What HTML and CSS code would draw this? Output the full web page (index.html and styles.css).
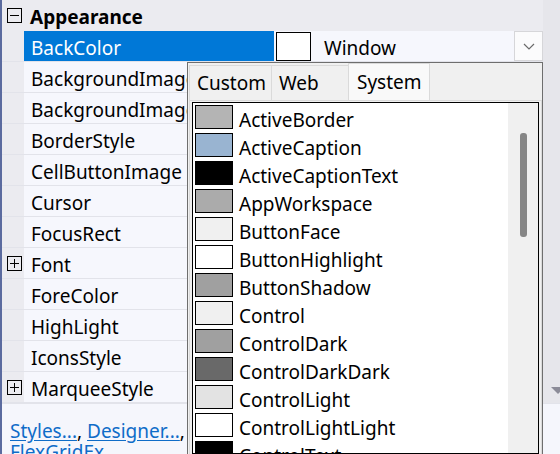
FILE: index.html
```html
<!DOCTYPE html>
<html>
<head>
<meta charset="utf-8">
<link rel="stylesheet" href="styles.css">
</head>
<body>
<div class="app">
  <div class="main">
    <div class="pane">
      <div class="row cat">
        <span class="gut"><span class="box minus"></span></span>
        <span class="label">Appearance</span>
      </div>
      <div class="row sel">
        <span class="gut"></span>
        <span class="label">BackColor</span>
        <span class="value">
          <span class="cswatch"></span>
          <span class="vtext">Window</span>
          <span class="ddbtn"><svg width="12" height="7" viewBox="0 0 12 7"><path d="M1 1 L6 6 L11 1" fill="none" stroke="#6a6a6a" stroke-width="1.2"/></svg></span>
        </span>
      </div>
      <div class="row"><span class="gut"></span><span class="label">BackgroundImage</span><span class="value"></span></div>
      <div class="row"><span class="gut"></span><span class="label">BackgroundImageLayout</span><span class="value"></span></div>
      <div class="row"><span class="gut"></span><span class="label">BorderStyle</span><span class="value"></span></div>
      <div class="row"><span class="gut"></span><span class="label">CellButtonImage</span><span class="value"></span></div>
      <div class="row"><span class="gut"></span><span class="label">Cursor</span><span class="value"></span></div>
      <div class="row"><span class="gut"></span><span class="label">FocusRect</span><span class="value"></span></div>
      <div class="row"><span class="gut"><span class="box plus"></span></span><span class="label">Font</span><span class="value"></span></div>
      <div class="row"><span class="gut"></span><span class="label">ForeColor</span><span class="value"></span></div>
      <div class="row"><span class="gut"></span><span class="label">HighLight</span><span class="value"></span></div>
      <div class="row"><span class="gut"></span><span class="label">IconsStyle</span><span class="value"></span></div>
      <div class="row"><span class="gut"><span class="box plus"></span></span><span class="label">MarqueeStyle</span><span class="value"></span></div>
    </div>
    <div class="vscroll">
      <svg width="17" height="7" viewBox="0 0 17 7"><polygon points="8,0 22,0 15,7" fill="#8b8b98"/></svg>
    </div>
  </div>
  <div class="commands">
    <a href="#">Styles...</a>, <a href="#">Designer...</a>, <br><a href="#">FlexGridEx...</a>
  </div>

  <div class="popup">
    <div class="tabs">
      <span class="tab t-custom">Custom</span>
      <span class="tab t-web">Web</span>
      <span class="tab t-system active">System</span>
    </div>
    <div class="panel">
      <div class="listbox">
        <div class="items">
          <div class="item"><span class="sw" style="background:#b4b4b4"></span><span class="nm">ActiveBorder</span></div>
          <div class="item"><span class="sw" style="background:#99b4d1"></span><span class="nm">ActiveCaption</span></div>
          <div class="item"><span class="sw" style="background:#000000"></span><span class="nm">ActiveCaptionText</span></div>
          <div class="item"><span class="sw" style="background:#ababab"></span><span class="nm">AppWorkspace</span></div>
          <div class="item"><span class="sw" style="background:#f0f0f0"></span><span class="nm">ButtonFace</span></div>
          <div class="item"><span class="sw" style="background:#ffffff"></span><span class="nm">ButtonHighlight</span></div>
          <div class="item"><span class="sw" style="background:#a0a0a0"></span><span class="nm">ButtonShadow</span></div>
          <div class="item"><span class="sw" style="background:#f0f0f0"></span><span class="nm">Control</span></div>
          <div class="item"><span class="sw" style="background:#a0a0a0"></span><span class="nm">ControlDark</span></div>
          <div class="item"><span class="sw" style="background:#696969"></span><span class="nm">ControlDarkDark</span></div>
          <div class="item"><span class="sw" style="background:#e3e3e3"></span><span class="nm">ControlLight</span></div>
          <div class="item"><span class="sw" style="background:#ffffff"></span><span class="nm">ControlLightLight</span></div>
          <div class="item"><span class="sw" style="background:#000000"></span><span class="nm">ControlText</span></div>
        </div>
        <div class="lscroll"><span class="thumb"></span></div>
      </div>
    </div>
  </div>
</div>
</body>
</html>
```
FILE: styles.css
```css
html, body {
  margin: 0;
  padding: 0;
}
body {
  width: 560px;
  height: 454px;
  overflow: hidden;
  font-family: "Noto Sans", "Open Sans", sans-serif;
  font-size: 19px;
  color: #000;
  background: #f5f6fc;
}
.app {
  position: relative;
  height: 454px;
  border-left: 2px solid #5b6b9f;
  box-sizing: border-box;
  overflow: hidden;
}
.main {
  display: flex;
  height: 403px;
}
.pane {
  width: 541px;
  background: #ebebf0;
}
.row {
  display: grid;
  grid-template-columns: 22px 250px 1fr;
  height: 30px;
  border-bottom: 1px solid #e2e3ea;
  white-space: nowrap;
}
.gut {
  background: #ebebf0;
  display: flex;
  align-items: center;
  padding-left: 5px;
}
.label {
  background: #f6f7fd;
  padding: 4px 0 0 7px;
  line-height: 26px;
  overflow: hidden;
}
.value {
  background: #f6f7fd;
  border-left: 1px solid #e2e3ea;
}
.row.cat {
  grid-template-columns: 22px 1fr;
  border-bottom-color: #ebebf0;
}
.row.cat .label {
  background: #ebebf0;
  font-weight: bold;
  padding-left: 6px;
}
.row.sel .label {
  background: #0078d7;
  color: #fff;
}
.row.sel .value {
  display: flex;
  align-items: center;
  border-left: 0;
}
.cswatch {
  width: 35px;
  height: 29px;
  margin-left: 2px;
  border: 1px solid #000;
  background: #fff;
  box-sizing: border-box;
}
.vtext {
  margin-left: 13px;
  padding-top: 4px;
  flex: 1;
}
.ddbtn {
  width: 29px;
  height: 30px;
  box-sizing: border-box;
  border: 1px solid #d6d6d9;
  background: #fbfbfc;
  display: flex;
  align-items: center;
  justify-content: center;
}
.box {
  position: relative;
  width: 15px;
  height: 15px;
  border: 1px solid #000;
  box-sizing: border-box;
  background: transparent;
}
.box::before {
  content: "";
  position: absolute;
  left: 2px;
  right: 2px;
  top: 6px;
  height: 1px;
  background: #000;
}
.box.plus::after {
  content: "";
  position: absolute;
  top: 2px;
  bottom: 2px;
  left: 6px;
  width: 1px;
  background: #000;
}
.vscroll {
  width: 17px;
  background: #e6e6eb;
  display: flex;
  flex-direction: column;
  justify-content: flex-end;
  padding-bottom: 9px;
  box-sizing: border-box;
  overflow: hidden;
}
.vscroll svg {
  display: block;
  overflow: hidden;
}
.commands {
  height: 51px;
  box-sizing: border-box;
  border-top: 1px solid #e2e3ea;
  padding: 17px 0 0 8px;
  line-height: 21px;
  background: #f5f6fc;
}
.commands a {
  color: #0f6cc8;
  text-decoration: underline;
  text-underline-offset: 2px;
}

/* drop-down colour picker */
.popup {
  position: absolute;
  left: 185px;
  top: 62px;
  width: 356px;
  height: 420px;
  box-sizing: border-box;
  border: 1px solid #6e6e6e;
  background: #f0f0f0;
}
.tabs {
  display: flex;
  align-items: flex-end;
  height: 37px;
  padding-left: 1px;
}
.tab {
  box-sizing: border-box;
  height: 35px;
  line-height: 31px;
  padding: 2px 0 0 7px;
  border: 1px solid #dadada;
  border-bottom: 0;
  background: #f0f0f0;
}
.t-custom { width: 83px; }
.t-web { width: 77px; border-left: 0; }
.t-system { width: 82px; padding-left: 8px; border-left: 1px solid #dadada; }
.tab.active {
  height: 37px;
  padding-top: 3px;
  background: #f9f9f9;
  margin-left: -1px;
}
.panel {
  margin-left: 1px;
  width: 353px;
  height: 380px;
  box-sizing: border-box;
  border: 1px solid #dadada;
  padding: 1px 2px 0 2px;
  background: #f0f0f0;
}
.listbox {
  display: flex;
  height: 350px;
  border: 1px solid #000;
  background: #fff;
  overflow: hidden;
}
.items {
  flex: 1;
  overflow: hidden;
}
.item {
  display: flex;
  align-items: center;
  height: 28px;
  white-space: nowrap;
}
.nm {
  line-height: 24px;
  padding-top: 5px;
}
.sw {
  flex: none;
  width: 38px;
  height: 24px;
  box-sizing: border-box;
  border: 1px solid #000;
  margin: 0 6px 0 2px;
}
.lscroll {
  width: 30px;
  background: #f0f0f0;
  display: flex;
  justify-content: center;
  padding-top: 30px;
  box-sizing: border-box;
}
.thumb {
  width: 7px;
  height: 104px;
  border-radius: 3px;
  background: #868686;
}
```
